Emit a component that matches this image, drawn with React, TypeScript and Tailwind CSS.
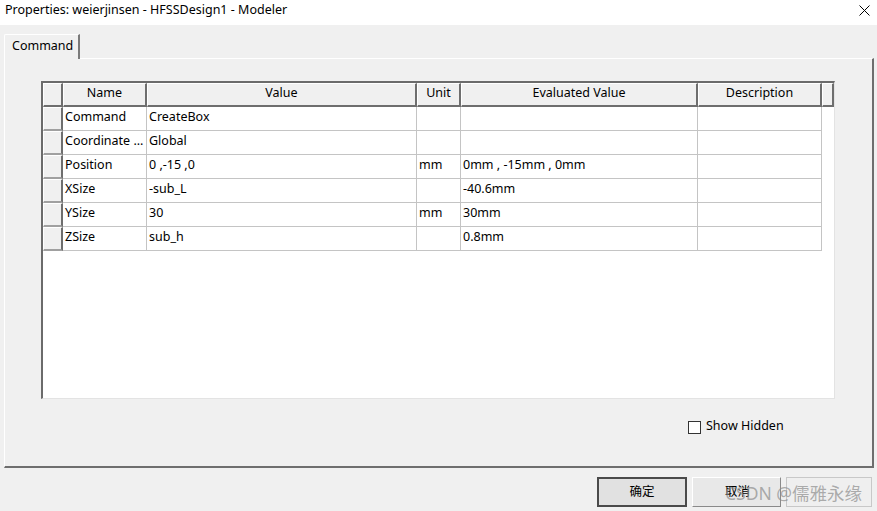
const rows = [
  { name: "Command", value: "CreateBox", unit: "", evaluated: "" },
  { name: "Coordinate ...", value: "Global", unit: "", evaluated: "" },
  { name: "Position", value: "0 ,-15 ,0", unit: "mm", evaluated: "0mm , -15mm , 0mm" },
  { name: "XSize", value: "-sub_L", unit: "", evaluated: "-40.6mm" },
  { name: "YSize", value: "30", unit: "mm", evaluated: "30mm" },
  { name: "ZSize", value: "sub_h", unit: "", evaluated: "0.8mm" },
]

const font = { fontFamily: '"Noto Sans", "Noto Sans CJK SC", sans-serif' }

function HeaderCell({ w, label }: { w: string; label?: string }) {
  return (
    <div
      className={`${w} h-full shrink-0 flex items-center justify-center pb-[2px] bg-[#f0f0f0] border-t border-l border-t-white border-l-white border-r-2 border-b-2 border-r-[#6e6e6e] border-b-[#6e6e6e] text-[12.5px] text-black`}
    >
      {label}
    </div>
  )
}

function DataCell({ w, text }: { w: string; text: string }) {
  return (
    <div
      className={`${w} h-full shrink-0 flex items-center pl-[2px] pb-[2px] bg-white border-r border-b border-[#c4c4c4] text-[12.5px] text-black whitespace-nowrap overflow-hidden`}
    >
      {text}
    </div>
  )
}

export default function App() {
  return (
    <div className="w-[877px] h-[511px] bg-[#f0f0f0] relative overflow-hidden select-none" style={font}>
      {/* Title bar */}
      <div className="h-[25px] bg-white flex items-center justify-between pl-[5px] pr-[7px] pb-[4px]">
        <span className="text-[12.5px] text-black">Properties: weierjinsen - HFSSDesign1 - Modeler</span>
        <svg width="11" height="11" viewBox="0 0 11 11">
          <path d="M0.5 0.5 L10.5 10.5 M10.5 0.5 L0.5 10.5" stroke="#000" strokeWidth="1" />
        </svg>
      </div>

      {/* Tab strip */}
      <div className="pl-[4px] pt-[9px] flex">
        <div className="relative z-10 w-[76px] h-[25px] -mb-px bg-[#f0f0f0] border-t border-l border-t-white border-l-white border-r-2 border-r-[#7a7a7a] rounded-tl-[2px] flex items-center pl-[7px] pb-[2px] text-[12.5px] text-black">
          Command
        </div>
      </div>

      {/* Tab panel */}
      <div className="ml-[4px] w-[870px] h-[410px] border-t border-l border-t-white border-l-white border-r-2 border-b-2 border-r-[#6e6e6e] border-b-[#6e6e6e] pl-[36px] pt-[22px] flex flex-col">
        {/* Property grid */}
        <div className="w-[794px] h-[318px] bg-white border-l-2 border-t-2 border-l-[#6b6b6b] border-t-[#6b6b6b] border-r border-b border-r-[#e3e3e3] border-b-[#e3e3e3] flex flex-col">
          <div className="h-[24px] flex">
            <HeaderCell w="w-[20px]" />
            <HeaderCell w="w-[84px]" label="Name" />
            <HeaderCell w="w-[270px]" label="Value" />
            <HeaderCell w="w-[44px]" label="Unit" />
            <HeaderCell w="w-[237px]" label="Evaluated Value" />
            <HeaderCell w="w-[124px]" label="Description" />
            <HeaderCell w="w-[12px]" />
          </div>
          {rows.map((row) => (
            <div key={row.name} className="h-[24px] flex">
              <div className="w-[20px] h-full shrink-0 bg-[#f0f0f0] border-t border-l border-t-white border-l-white border-r-2 border-b-2 border-r-[#6e6e6e] border-b-[#a0a0a0]" />
              <DataCell w="w-[84px]" text={row.name} />
              <DataCell w="w-[270px]" text={row.value} />
              <DataCell w="w-[44px]" text={row.unit} />
              <DataCell w="w-[237px]" text={row.evaluated} />
              <DataCell w="w-[124px]" text="" />
            </div>
          ))}
        </div>

        {/* Show hidden */}
        <div className="mt-[18px] ml-[647px] flex items-center gap-[5px]">
          <div className="w-[13px] h-[13px] bg-white border border-[#333333]" />
          <span className="text-[12.5px] text-black pb-[2px]">Show Hidden</span>
        </div>
      </div>

      {/* Buttons */}
      <div className="flex justify-end gap-[5px] pr-[5px] pt-[9px]">
        <button className="w-[90px] h-[30px] bg-[#e1e1e1] border-2 border-[#4a4a4a] text-[12.5px] text-black flex items-center justify-center">
          确定
        </button>
        <button className="w-[89px] h-[30px] bg-[#e8e8e8] border border-t-white border-l-white border-r-[#8a8a8a] border-b-[#8a8a8a] text-[12.5px] text-black flex items-center justify-start pl-[32px]">
          取消
        </button>
        <button className="w-[86px] h-[30px] bg-[#efefef] border border-[#c8c8c8]" />
      </div>

      {/* Watermark */}
      <div className="absolute left-[725px] top-[480px] text-[17.5px] text-[#8c8c8c]/70 whitespace-nowrap" style={font}>
        CSDN @儒雅永缘
      </div>
    </div>
  )
}
